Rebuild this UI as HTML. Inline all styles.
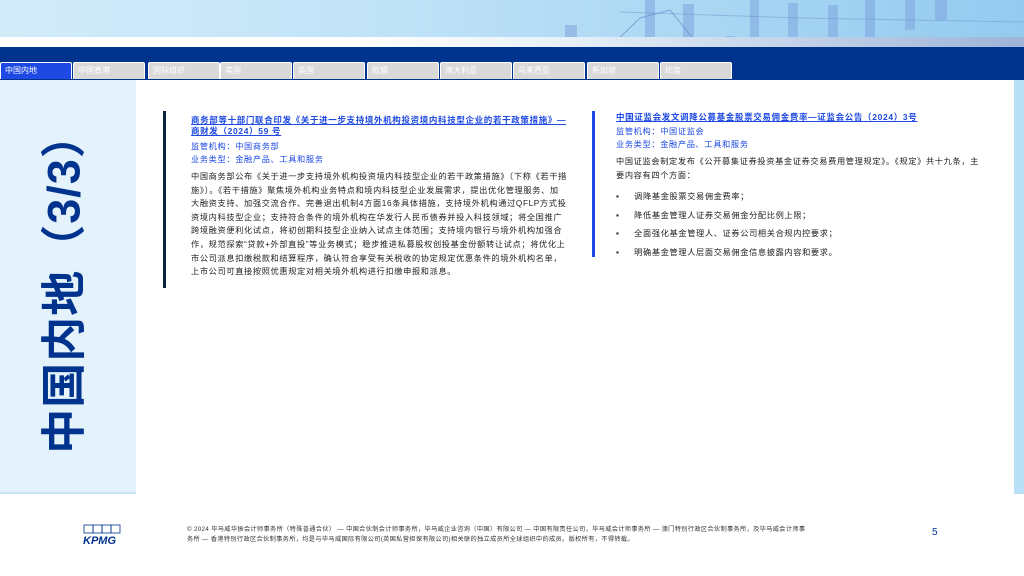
<!DOCTYPE html>
<html><head><meta charset="utf-8"><style>
*{margin:0;padding:0;box-sizing:border-box}
body{width:1024px;height:576px;position:relative;overflow:hidden;background:#fff;font-family:"Liberation Sans","Noto Sans CJK SC",sans-serif}
.banner{position:absolute;left:0;top:0;width:1024px;height:52px;background:linear-gradient(90deg,#d3ecfa 0%,#bfe2f7 40%,#a9d6f3 70%,#93cbef 100%)}
.wstrip{position:absolute;left:0;top:37px;width:1024px;height:10px;background:linear-gradient(90deg,#fff 0%,#fff 35%,#e8f1fa 55%,#9db4d8 100%)}
.bar{position:absolute;left:0;top:47px;width:1024px;height:33px;background:#00338d}
.tab{position:absolute;top:62px;height:17px;width:72px;background:#d9d9d9;border:1px solid #fff;border-bottom:none;color:#fff;font-size:8px;line-height:16px;padding-left:4px;border-radius:2px 2px 0 0}
.tab.a{background:#1e49e2}
.left{position:absolute;left:0;top:80px;width:136px;height:414px;background:#e3f2fb;border-bottom:2px solid #c7e5f6}
.vt{position:absolute;left:60px;top:203px;transform:translate(-50%,-50%) rotate(-90deg);white-space:nowrap;color:#00338d;font-size:45px;font-weight:bold;letter-spacing:1px}
.rstrip{position:absolute;left:1014px;top:80px;width:10px;height:414px;background:#b9e0f6}
.vbar{position:absolute;width:3px}
.col{position:absolute;font-size:8.2px;color:#222;letter-spacing:0.65px}
.col a{color:#1e49e2;text-decoration:underline;font-weight:bold;font-size:8.5px}
.blue{color:#1e49e2}
.foot{position:absolute;left:187px;top:525px;font-size:6.2px;color:#333;line-height:10px;width:622px;letter-spacing:0.35px}
</style></head><body>
<div class="banner">
<svg width="1024" height="52" style="position:absolute;left:0;top:0">
<g fill="#7fa6df" opacity="0.55">
<rect x="565" y="25" width="12" height="22"/><rect x="645" y="0" width="10" height="47"/><rect x="683" y="4" width="11" height="43"/><rect x="725" y="36" width="10" height="11"/>
<rect x="750" y="0" width="9" height="47"/><rect x="788" y="3" width="10" height="44"/><rect x="828" y="5" width="10" height="42"/><rect x="865" y="0" width="10" height="40"/><rect x="905" y="0" width="10" height="30"/><rect x="935" y="0" width="12" height="20"/>
</g>
<polyline points="610,47 640,18 670,10 700,47" fill="none" stroke="#6f95cf" stroke-width="1.2" opacity="0.7"/>
<polyline points="620,12 800,18 1024,22" fill="none" stroke="#6f95cf" stroke-width="1" opacity="0.5"/>
</svg>
</div>
<div class="wstrip"></div>
<div class="bar"></div>
<div class="tab a" style="left:0">中国内地</div>
<div class="tab" style="left:73px">中国香港</div>
<div class="tab" style="left:148px">国际组织</div>
<div class="tab" style="left:220px">美国</div>
<div class="tab" style="left:293px">英国</div>
<div class="tab" style="left:367px">欧盟</div>
<div class="tab" style="left:440px">澳大利亚</div>
<div class="tab" style="left:513px">马来西亚</div>
<div class="tab" style="left:587px">新加坡</div>
<div class="tab" style="left:660px">印度</div>
<div class="left"><div class="vt">中国内地（3/3）</div></div>
<div class="rstrip"></div>

<div class="vbar" style="left:163px;top:111px;height:177px;background:#0c2340"></div>
<div class="col" style="left:191px;top:115px;width:376px">
<div style="line-height:10px"><a>商务部等十部门联合印发《关于进一步支持境外机构投资境内科技型企业的若干政策措施》—商财发（2024）59 号</a></div>
<div class="blue" style="margin-top:3px;line-height:13px">监管机构：中国商务部</div>
<div class="blue" style="line-height:13px">业务类型：金融产品、工具和服务</div>
<div style="margin-top:4px;line-height:13.6px">中国商务部公布《关于进一步支持境外机构投资境内科技型企业的若干政策措施》（下称《若干措施》）。《若干措施》聚焦境外机构业务特点和境内科技型企业发展需求，提出优化管理服务、加大融资支持、加强交流合作、完善退出机制4方面16条具体措施，支持境外机构通过QFLP方式投资境内科技型企业；支持符合条件的境外机构在华发行人民币债券并投入科技领域；将全国推广跨境融资便利化试点，将初创期科技型企业纳入试点主体范围；支持境内银行与境外机构加强合作，规范探索“贷款+外部直投”等业务模式；稳步推进私募股权创投基金份额转让试点；将优化上市公司派息扣缴税款和结算程序，确认符合享受有关税收的协定规定优惠条件的境外机构名单，上市公司可直接按照优惠规定对相关境外机构进行扣缴申报和派息。</div>
</div>

<div class="vbar" style="left:592px;top:111px;height:146px;background:#1e49e2"></div>
<div class="col" style="left:616px;top:112px;width:370px">
<div style="line-height:10px"><a>中国证监会发文调降公募基金股票交易佣金费率—证监会公告（2024）3号</a></div>
<div class="blue" style="margin-top:2px;line-height:13px">监管机构：中国证监会</div>
<div class="blue" style="line-height:13px">业务类型：金融产品、工具和服务</div>
<div style="margin-top:4px;line-height:13.6px">中国证监会制定发布《公开募集证券投资基金证券交易费用管理规定》。《规定》共十九条，主要内容有四个方面：</div>
<div style="margin-top:6px;line-height:18.5px">
<div>▪&nbsp;&nbsp;&nbsp;&nbsp;&nbsp;调降基金股票交易佣金费率；</div>
<div>▪&nbsp;&nbsp;&nbsp;&nbsp;&nbsp;降低基金管理人证券交易佣金分配比例上限；</div>
<div>▪&nbsp;&nbsp;&nbsp;&nbsp;&nbsp;全面强化基金管理人、证券公司相关合规内控要求；</div>
<div>▪&nbsp;&nbsp;&nbsp;&nbsp;&nbsp;明确基金管理人层面交易佣金信息披露内容和要求。</div>
</div>
</div>

<svg style="position:absolute;left:82px;top:524px" width="44" height="22">
<g fill="none" stroke="#00338d" stroke-width="0.8"><rect x="2" y="1" width="9" height="8"/><rect x="11" y="1" width="9" height="8"/><rect x="20" y="1" width="9" height="8"/><rect x="29" y="1" width="9" height="8"/></g>
<text x="1" y="20" font-family="Liberation Sans" font-weight="bold" font-style="italic" font-size="11" fill="#00338d">KPMG</text>
</svg>
<div class="foot">© 2024 毕马威华振会计师事务所（特殊普通合伙） — 中国合伙制会计师事务所，毕马威企业咨询（中国）有限公司 — 中国有限责任公司，毕马威会计师事务所 — 澳门特别行政区合伙制事务所，及毕马威会计师事务所 — 香港特别行政区合伙制事务所，均是与毕马威国际有限公司(英国私营担保有限公司)相关联的独立成员所全球组织中的成员。版权所有，不得转载。</div>
<div style="position:absolute;left:932px;top:527px;font-size:10px;color:#00338d">5</div>
</body></html>
